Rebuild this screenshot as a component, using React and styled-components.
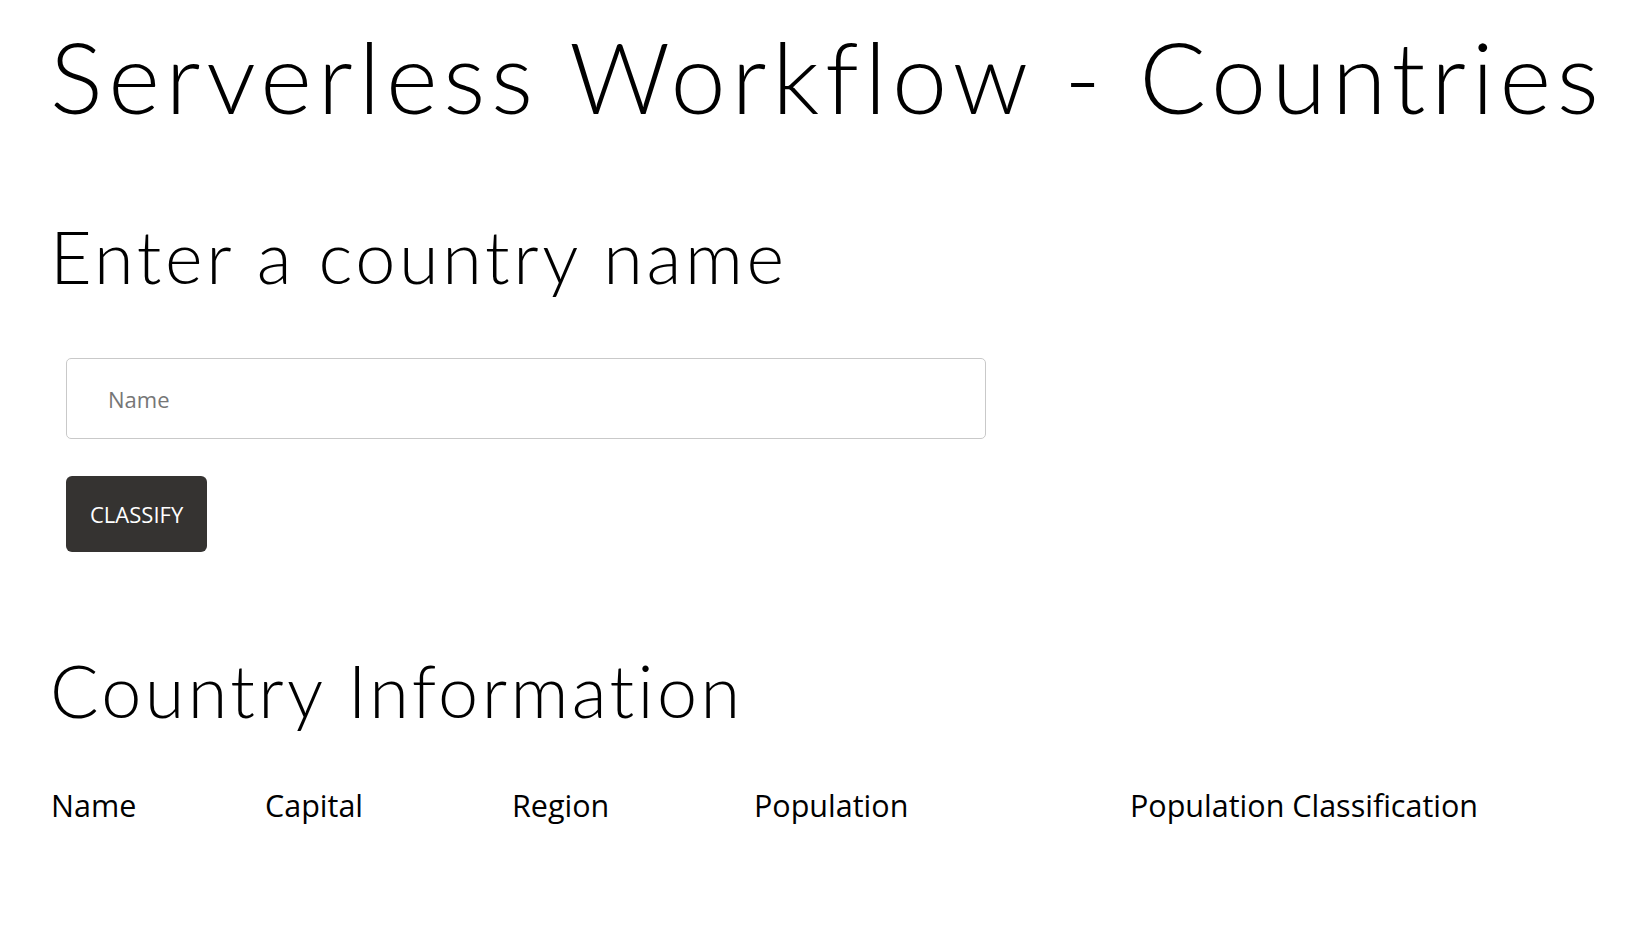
import React from "react";
import styled, { createGlobalStyle } from "styled-components";

const GlobalStyle = createGlobalStyle`
  html, body {
    margin: 0;
    padding: 0;
    background: #ffffff;
  }
  body {
    font-family: "Open Sans", "Noto Sans", sans-serif;
    color: #000;
  }
`;

const Page = styled.main`
  padding: 17px 20px 40px 50px;
  display: flex;
  flex-direction: column;
`;

const Title = styled.h1`
  margin: 0;
  font-family: "Lato", "Inter", sans-serif;
  font-weight: 300;
  font-size: 99px;
  line-height: 1.2;
  letter-spacing: 5.7px;
  white-space: nowrap;
  color: #000;
`;

const SectionTitle = styled.h2`
  margin: ${(p) => p.$top}px 0 0;
  font-family: "Lato", "Inter", sans-serif;
  font-weight: 300;
  font-size: 72px;
  line-height: 1.2;
  letter-spacing: ${(p) => p.$spacing}px;
  white-space: nowrap;
  color: #000;
`;

const Form = styled.form`
  display: flex;
  flex-direction: column;
  align-items: flex-start;
  gap: 37px;
  margin-top: 59px;
  padding-left: 16px;
`;

const NameInput = styled.input`
  box-sizing: border-box;
  width: 920px;
  height: 81px;
  padding: 0 20px 0 41px;
  border: 1.5px solid #c9c9c9;
  border-radius: 5px;
  font-family: "Open Sans", sans-serif;
  font-size: 22px;
  color: #333;
  outline: none;
  &::placeholder {
    color: #767676;
  }
`;

const ClassifyButton = styled.button`
  box-sizing: border-box;
  height: 76px;
  padding: 0 24px;
  border: none;
  border-radius: 6px;
  background: #353331;
  color: #ffffff;
  font-family: "Open Sans", sans-serif;
  font-size: 22px;
  cursor: pointer;
`;

const InfoTable = styled.table`
  width: 1519px;
  margin-top: 51px;
  border-collapse: collapse;
  table-layout: fixed;
`;

const HeaderCell = styled.th`
  box-sizing: border-box;
  width: ${(p) => p.$w}px;
  padding: 0 0 0 1px;
  text-align: left;
  font-family: "Open Sans", sans-serif;
  font-weight: 500;
  font-size: 30.5px;
  line-height: 1.362;
  color: #000;
  white-space: nowrap;
`;

const columns = [
  { label: "Name", w: 214 },
  { label: "Capital", w: 247 },
  { label: "Region", w: 242 },
  { label: "Population", w: 376 },
  { label: "Population Classification", w: 440 },
];

export default function App() {
  return (
    <>
      <GlobalStyle />
      <Page>
        <Title>Serverless Workflow - Countries</Title>
        <SectionTitle $top={77} $spacing={3.6}>
          Enter a country name
        </SectionTitle>
        <Form onSubmit={(e) => e.preventDefault()}>
          <NameInput type="text" placeholder="Name" />
          <ClassifyButton type="submit">CLASSIFY</ClassifyButton>
        </Form>
        <SectionTitle $top={95} $spacing={3.35}>
          Country Information
        </SectionTitle>
        <InfoTable>
          <thead>
            <tr>
              {columns.map((c) => (
                <HeaderCell key={c.label} $w={c.w}>
                  {c.label}
                </HeaderCell>
              ))}
            </tr>
          </thead>
          <tbody />
        </InfoTable>
      </Page>
    </>
  );
}
